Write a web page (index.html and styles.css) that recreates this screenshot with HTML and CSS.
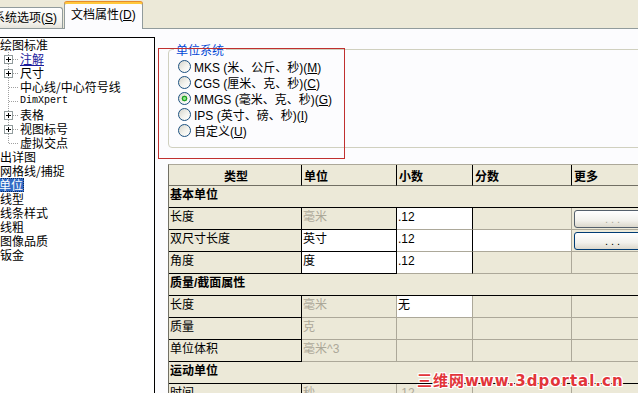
FILE: index.html
```html
<!DOCTYPE html>
<html lang="zh-CN">
<head>
  <meta charset="UTF-8">
  <meta name="viewport" content="width=device-width, initial-scale=1.0">
  <title>文档属性 - 单位</title>
  <link rel="stylesheet" href="styles.css">
</head>
<body>
  <div class="tabbar">
    <div class="tab">系统选项(<u>S</u>)</div>
    <div class="tab active">文档属性(<u>D</u>)</div>
  </div>

  <div class="page">
    <ul class="tree">
      <li>绘图标准</li>
      <li class="sub"><span class="twig"><i class="plus"></i></span><span class="link">注解</span></li>
      <li class="sub"><span class="twig"><i class="plus"></i></span>尺寸</li>
      <li class="sub"><span class="twig"></span>中心线/中心符号线</li>
      <li class="sub"><span class="twig"></span><span class="mono">DimXpert</span></li>
      <li class="sub"><span class="twig"><i class="plus"></i></span>表格</li>
      <li class="sub"><span class="twig"><i class="plus"></i></span>视图标号</li>
      <li class="sub last"><span class="twig"></span>虚拟交点</li>
      <li>出详图</li>
      <li>网格线/捕捉</li>
      <li><span class="selected">单位</span></li>
      <li>线型</li>
      <li>线条样式</li>
      <li>线粗</li>
      <li>图像品质</li>
      <li>钣金</li>
    </ul>

    <div class="content">
      <fieldset class="group">
        <legend>单位系统</legend>
        <label class="radio"><span class="bullet"></span><span>MKS (米、公斤、秒)(<u>M</u>)</span></label>
        <label class="radio"><span class="bullet"></span><span>CGS (厘米、克、秒)(<u>C</u>)</span></label>
        <label class="radio"><span class="bullet on"></span><span>MMGS (毫米、克、秒)(<u>G</u>)</span></label>
        <label class="radio"><span class="bullet"></span><span>IPS (英寸、磅、秒)(<u>I</u>)</span></label>
        <label class="radio"><span class="bullet"></span><span>自定义(<u>U</u>)</span></label>
      </fieldset>

      <table class="grid">
        <colgroup>
          <col class="c-type">
          <col class="c-unit">
          <col class="c-dec">
          <col class="c-frac">
          <col class="c-more">
        </colgroup>
        <thead>
          <tr>
            <th class="center">类型</th>
            <th>单位</th>
            <th>小数</th>
            <th>分数</th>
            <th>更多</th>
          </tr>
        </thead>
        <tbody>
          <tr class="section"><td colspan="5">基本单位</td></tr>
          <tr>
            <td class="type">长度</td>
            <td class="dk muted">毫米</td>
            <td class="edit dr">.12</td>
            <td></td>
            <td><button class="more" disabled>...</button></td>
          </tr>
          <tr>
            <td class="type">双尺寸长度</td>
            <td class="dk edit">英寸</td>
            <td class="edit dr">.12</td>
            <td class="edit"></td>
            <td><button class="more">...</button></td>
          </tr>
          <tr>
            <td class="type">角度</td>
            <td class="dk edit">度</td>
            <td class="edit dr">.12</td>
            <td></td>
            <td></td>
          </tr>
          <tr class="section"><td colspan="5">质量/截面属性</td></tr>
          <tr>
            <td class="type">长度</td>
            <td class="muted">毫米</td>
            <td class="edit">无</td>
            <td></td>
            <td></td>
          </tr>
          <tr>
            <td class="type">质量</td>
            <td class="muted">克</td>
            <td></td>
            <td></td>
            <td></td>
          </tr>
          <tr>
            <td class="type">单位体积</td>
            <td class="muted">毫米^3</td>
            <td></td>
            <td></td>
            <td></td>
          </tr>
          <tr class="section"><td colspan="5">运动单位</td></tr>
          <tr>
            <td class="type">时间</td>
            <td class="muted">秒</td>
            <td class="muted">.12</td>
            <td></td>
            <td></td>
          </tr>
        </tbody>
      </table>
    </div>
  </div>

  <div class="annot"></div>
  <div class="watermark">三维网www.3dportal.cn</div>
</body>
</html>
```

FILE: styles.css
```css
html,
body {
  margin: 0;
  padding: 0;
}

body {
  width: 638px;
  height: 393px;
  overflow: hidden;
  position: relative;
  background: #fcfcfe;
  color: #000;
  font-family: "Liberation Sans", "Noto Sans CJK SC", sans-serif;
  font-size: 12px;
}

/* tab strip */
.tabbar {
  height: 28px;
  margin-left: -13px;
  display: flex;
  align-items: flex-end;
  background: #ece9d8;
  border-bottom: 1px solid #919b9c;
}

.tab {
  height: 20px;
  padding: 0 5px;
  line-height: 20px;
  white-space: nowrap;
  border: 1px solid #919b9c;
  border-bottom: none;
  border-radius: 3px 3px 0 0;
  background: linear-gradient(#ffffff, #f4f3ee 70%, #e6e4dc);
}

.tab.active {
  height: 24px;
  margin-left: 1px;
  margin-bottom: -1px;
  padding: 1px 6px 0 6px;
  border-top: 2px solid #ffc83c;
  box-shadow: 0 -1px 0 #e68b2c;
  background: #fcfcfe;
}

.page {
  display: flex;
  align-items: flex-start;
}

/* tree */
.tree {
  list-style: none;
  flex: none;
  width: 158px;
  height: 380px;
  margin: 8px 0 0 -3px;
  padding: 0 0 0 2px;
  box-sizing: border-box;
  border: 1px solid #000;
  border-bottom: none;
  background: #fff;
  font-family: "Noto Sans CJK SC", sans-serif;
}

.tree li {
  height: 14px;
  line-height: 14px;
  display: flex;
  align-items: center;
  white-space: nowrap;
}

.twig {
  width: 20px;
  height: 14px;
  padding-left: 4px;
  box-sizing: border-box;
  display: flex;
  align-items: center;
  background:
    repeating-linear-gradient(to bottom, #a0a0a0 0 1px, transparent 1px 2px) 8px 0 / 1px 14px no-repeat,
    repeating-linear-gradient(to right, #a0a0a0 0 1px, transparent 1px 2px) 9px 7px / 9px 1px no-repeat;
}

.last .twig {
  background:
    repeating-linear-gradient(to bottom, #a0a0a0 0 1px, transparent 1px 2px) 8px 0 / 1px 8px no-repeat,
    repeating-linear-gradient(to right, #a0a0a0 0 1px, transparent 1px 2px) 9px 7px / 9px 1px no-repeat;
}

.plus {
  width: 9px;
  height: 9px;
  box-sizing: border-box;
  border: 1px solid #919b9c;
  background:
    linear-gradient(#000, #000) center / 5px 1px no-repeat,
    linear-gradient(#000, #000) center / 1px 5px no-repeat,
    #fff;
}

.link {
  color: #1c1c9c;
  text-decoration: underline;
}

.mono {
  font-family: "Liberation Mono", monospace;
  font-size: 10px;
}

.selected {
  margin-left: -2px;
  padding: 0 1px;
  background: #316ac5;
  color: #fff;
  outline: 1px dotted #0c2a5e;
  outline-offset: -1px;
}

/* right side */
.content {
  flex: none;
  padding-left: 13px;
}

.group {
  width: 520px;
  margin: 12px 0 0;
  padding: 0 0 9px 9px;
  border: 1px solid #d0d0bf;
  border-radius: 4px;
}

.group legend {
  margin-left: -4px;
  padding: 0 2px;
  line-height: 17px;
  color: #0046d5;
  font-family: "Noto Sans CJK SC", sans-serif;
}

.radio {
  height: 16px;
  display: flex;
  align-items: center;
  gap: 3px;
  white-space: nowrap;
}

.bullet {
  width: 13px;
  height: 13px;
  box-sizing: border-box;
  border: 1px solid #1c5180;
  border-radius: 50%;
  background: linear-gradient(135deg, #d5d4cb, #f3f3ee 55%, #ffffff);
}

.bullet.on {
  background:
    radial-gradient(circle, #8be28b 0 1px, #21a121 2px, #21a121 2.6px, transparent 3.2px),
    linear-gradient(135deg, #d5d4cb, #f3f3ee 55%, #ffffff);
}

/* property grid */
.grid {
  width: 504px;
  margin-top: 16px;
  table-layout: fixed;
  border-collapse: separate;
  border-spacing: 0;
  border-top: 1px solid #aca899;
  border-left: 1px solid #716f64;
  font-family: "Liberation Sans", "Noto Sans CJK SC", sans-serif;
}

.c-type { width: 133px; }
.c-unit { width: 95px; }
.c-dec { width: 76px; }
.c-frac { width: 99px; }
.c-more { width: 100px; }

.grid th,
.grid td {
  padding: 0 0 0 1px;
  border-right: 1px solid #aca899;
  border-bottom: 1px solid #aca899;
  background: #ece9d8;
  text-align: left;
  white-space: nowrap;
  overflow: hidden;
}

.grid th {
  height: 20px;
  padding-left: 2px;
  font-weight: bold;
  border-right-color: #000;
  border-bottom-color: #716f64;
}

.grid th.center {
  text-align: center;
}

.grid td {
  height: 21px;
  padding-top: 1px;
  box-sizing: border-box;
  line-height: 16px;
  vertical-align: top;
}

.grid tbody tr {
  height: 22px;
}

.grid .section td {
  font-weight: bold;
  border-right: none;
  border-bottom-color: #000;
}

.grid td.type {
  border-right-color: #000;
  border-bottom-color: #000;
}

.grid td.dk {
  border-right-color: #000;
  border-bottom-color: #000;
}

.grid td.dr {
  border-right-color: #000;
}

.grid td.edit {
  background: #fff;
}

.grid td.muted {
  color: #aca899;
}

.more {
  width: 80px;
  height: 18px;
  margin: 1px 0 0 1px;
  padding: 0;
  display: block;
  border: 1px solid #003c74;
  border-radius: 3px;
  background: linear-gradient(#ffffff, #f2f1ec 60%, #dcd8cc);
  font: 11px "Liberation Sans", sans-serif;
  letter-spacing: 3px;
  color: #000;
}

.more:disabled {
  border-color: #55606c;
  color: #aca899;
}

/* overlays on the screenshot */
.annot {
  position: absolute;
  left: 158px;
  top: 48px;
  width: 185px;
  height: 109px;
  border: 1px solid #c0302f;
}

.watermark {
  position: absolute;
  left: 417px;
  top: 369px;
  font: bold 15px "DejaVu Sans", "Noto Sans CJK SC", sans-serif;
  letter-spacing: 1px;
  color: #e2353a;
  text-shadow:
    1px 0 0 #fff, -1px 0 0 #fff, 0 1px 0 #fff, 0 -1px 0 #fff,
    1px 1px 0 #fff, -1px -1px 0 #fff, 1px -1px 0 #fff, -1px 1px 0 #fff;
}
```
